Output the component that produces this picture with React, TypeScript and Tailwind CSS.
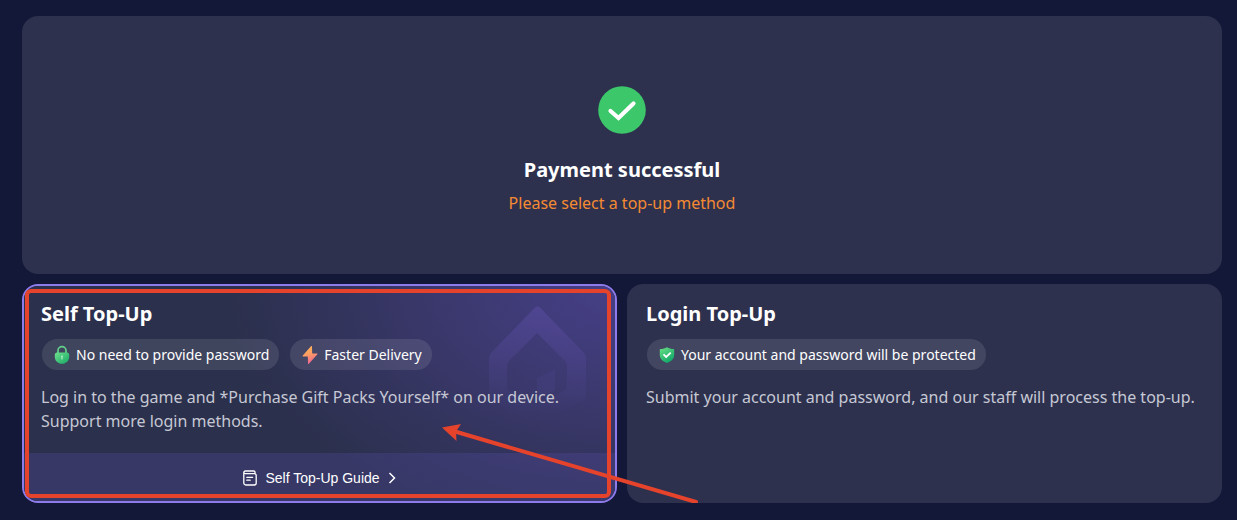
import type { ReactNode } from "react";

function SuccessIcon() {
  return (
    <svg viewBox="0 0 48 48" className="size-12" aria-hidden="true">
      <circle cx="24" cy="24" r="23.8" fill="#3cc76a" />
      <path d="M12.5 25 20.5 32 35.5 17.5" fill="none" stroke="#fff" strokeWidth="4.200" strokeLinecap="round" strokeLinejoin="miter" />
    </svg>
  );
}

function LockIcon() {
  return (
    <svg viewBox="0 0 16 20" className="h-5 w-4 shrink-0" aria-hidden="true">
      <defs>
        <linearGradient id="lock-body" x1="0" y1="0" x2="1" y2="1">
          <stop offset="0" stopColor="#6fe08d" />
          <stop offset="1" stopColor="#14a765" />
        </linearGradient>
      </defs>
      <path d="M4 9V5.600a4 4 0 0 1 8 0V9" fill="none" stroke="#62cf8b" strokeWidth="1.7" />
      <path d="M3 7.500h10c1.400 0 2.200 1 2.200 2.500v1.500c0 4.200-3 7.300-7.200 7.300S.8 15.700.8 11.500V10C.8 8.500 1.600 7.500 3 7.500Z" fill="url(#lock-body)" />
      <path d="M8 10.600a1 1 0 0 1 .6 1.800v2.200H7.400v-2.200A1 1 0 0 1 8 10.600Z" fill="#a9ecc0" />
    </svg>
  );
}

function BoltIcon() {
  return (
    <svg viewBox="0 0 16 20" className="h-5 w-4 shrink-0" aria-hidden="true">
      <defs>
        <linearGradient id="bolt-fill" x1="0" y1="0" x2="0.3" y2="1">
          <stop offset="0" stopColor="#ffbd55" />
          <stop offset="0.55" stopColor="#fb9b64" />
          <stop offset="1" stopColor="#f06a91" />
        </linearGradient>
      </defs>
      <path d="M9 1.300 .8 10.600c-.4.500-.2 1 .4 1h4.600L6 18.500c0 .6.500.7.900.3l8.300-9.400c.4-.5.200-1-.4-1h-4.600L10 1.600c0-.6-.6-.7-1-.3Z" fill="url(#bolt-fill)" />
    </svg>
  );
}

function ShieldIcon() {
  return (
    <svg viewBox="0 0 16 20" className="h-5 w-4 shrink-0" aria-hidden="true">
      <defs>
        <linearGradient id="shield-fill" x1="0" y1="0" x2="0.6" y2="1">
          <stop offset="0" stopColor="#6ee286" />
          <stop offset="1" stopColor="#10a868" />
        </linearGradient>
      </defs>
      <path d="M8 2.200c2 1.200 4.200 1.700 6.500 1.800.4 0 .7.300.7.700V10c0 3.700-2.700 6.300-7.200 8C3.500 16.300.8 13.700.8 10V4.700c0-.4.300-.7.700-.7C3.800 3.900 6 3.400 8 2.200Z" fill="url(#shield-fill)" />
      <path d="m4.500 9.300 2.700 2.600 4.500-4.300" fill="none" stroke="#fff" strokeWidth="1.800" />
    </svg>
  );
}

function GuideIcon() {
  return (
    <svg viewBox="0 0 14 16" className="h-4 w-3.5" fill="none" stroke="#fff" strokeWidth="1.300" strokeLinecap="round" strokeLinejoin="round" aria-hidden="true">
      <path d="M.8 2.300v10.700a2 2 0 0 0 2 2h8.400a2 2 0 0 0 2-2V5.600a2 2 0 0 0-2-2H2.300C1.300 3.600.8 3 .8 2.300S1.400 1 2.300 1h8.500c.7 0 1.200.5 1.200 1.200v1.200" />
      <path d="M3.800 7.300h5.800M3.800 10.200h3.400" />
    </svg>
  );
}

function Chevron() {
  return (
    <svg viewBox="0 0 8 12" className="h-3 w-2" fill="none" stroke="#fff" strokeWidth="1.500" aria-hidden="true">
      <path d="m1.500 1 5 5-5 5" />
    </svg>
  );
}

function HouseEmblem() {
  return (
    <svg viewBox="0 0 100 116" className="absolute top-5 right-7 w-25" aria-hidden="true">
      <defs>
        <linearGradient id="emblem-fade" x1="0" y1="0" x2="0" y2="1">
          <stop offset="0" stopColor="#6655b5" stopOpacity="0.38" />
          <stop offset="0.5" stopColor="#6655b5" stopOpacity="0.18" />
          <stop offset="0.95" stopColor="#6655b5" stopOpacity="0" />
        </linearGradient>
      </defs>
      <path
        fillRule="evenodd"
        fill="url(#emblem-fade)"
        d="M48 1.500a4 4 0 0 1 5 0L97 47q2 2.500 2 6v36q0 4-3.500 6L54 115q-4 2-8 0L5.500 95Q2 93 2 89V53q0-3.500 2-6ZM50 27 22 55q-2 2-2 5v20q0 3 3 5l27 14 27-14q3-2 3-5V60q0-3-2-5Z"
      />
      <path d="m50 72 18-9v21L50 94Z" fill="#6655b5" fillOpacity="0.12" />
    </svg>
  );
}

function Tag({ icon, children }: { icon: ReactNode; children: ReactNode }) {
  return (
    <li className="flex h-[31px] items-center gap-1.5 rounded-full bg-white/10 pr-2.5 pl-3 text-sm text-white">
      {icon}
      {children}
    </li>
  );
}

function MethodBody({ title, tags, children }: { title: string; tags: ReactNode; children: ReactNode }) {
  return (
    <div className="relative px-[17px] pt-3.5 pb-5">
      <h2 className="text-xl leading-7 font-bold text-white">{title}</h2>
      <ul className="mt-[11px] flex flex-wrap gap-[11px] pl-px">{tags}</ul>
      <p className="mt-[15px] text-base leading-6 text-[#c6c8d4]">{children}</p>
    </div>
  );
}

export default function App() {
  return (
    <main className="min-h-screen bg-[#131838] px-[22px] py-4 pr-[15px] font-['Noto_Sans',sans-serif]">
      <section className="flex flex-col items-center rounded-2xl bg-[#2d314e] pt-[70px] pb-[59px] text-center">
        <SuccessIcon />
        <h1 className="mt-[22px] text-xl leading-7 font-bold text-white">Payment successful</h1>
        <p className="mt-[7px] text-base leading-6 text-[#f58a32]">Please select a top-up method</p>
      </section>

      <div className="mt-2.5 grid grid-cols-2 gap-2.5">
        <section className="relative z-10 rounded-2xl border-2 border-[#8d7bec] bg-[#2b304c]">
          <div className="flex h-full flex-col overflow-hidden rounded-[14px] bg-[radial-gradient(ellipse_66%_120%_at_100%_0%,#463f87_0%,#3c3970_40%,#33345d_70%,#2b304c_100%)]">
            <HouseEmblem />
            <MethodBody
              title="Self Top-Up"
              tags={
                <>
                  <Tag icon={<LockIcon />}>No need to provide password</Tag>
                  <Tag icon={<BoltIcon />}>Faster Delivery</Tag>
                </>
              }
            >
              Log in to the game and *Purchase Gift Packs Yourself* on our device.
              <br />
              Support more login methods.
            </MethodBody>
            <button
              type="button"
              className="relative mt-auto flex h-12 items-center justify-center gap-2 bg-[#5a4fb4]/25 pt-0.5 font-['Liberation_Sans',Arial,sans-serif] text-sm text-white"
            >
              <GuideIcon />
              Self Top-Up Guide
              <Chevron />
            </button>
          </div>

          <div className="pointer-events-none absolute top-[3px] right-1 bottom-[3px] left-px rounded-md border-4 border-[#e5432c]" />
          <svg viewBox="0 0 260 80" className="pointer-events-none absolute -right-[84px] -bottom-0.5 w-[260px]" aria-hidden="true">
            <path d="M16 8.500 257 79" stroke="#e5432c" strokeWidth="4" strokeLinecap="round" />
            <path d="M3 4.500 22 1 17 8.500 17.500 18Z" fill="#e5432c" />
          </svg>
        </section>

        <section className="rounded-2xl border-2 border-transparent bg-[#2d314e]">
          <MethodBody title="Login Top-Up" tags={<Tag icon={<ShieldIcon />}>Your account and password will be protected</Tag>}>
            Submit your account and password, and our staff will process the top-up.
          </MethodBody>
        </section>
      </div>
    </main>
  );
}
